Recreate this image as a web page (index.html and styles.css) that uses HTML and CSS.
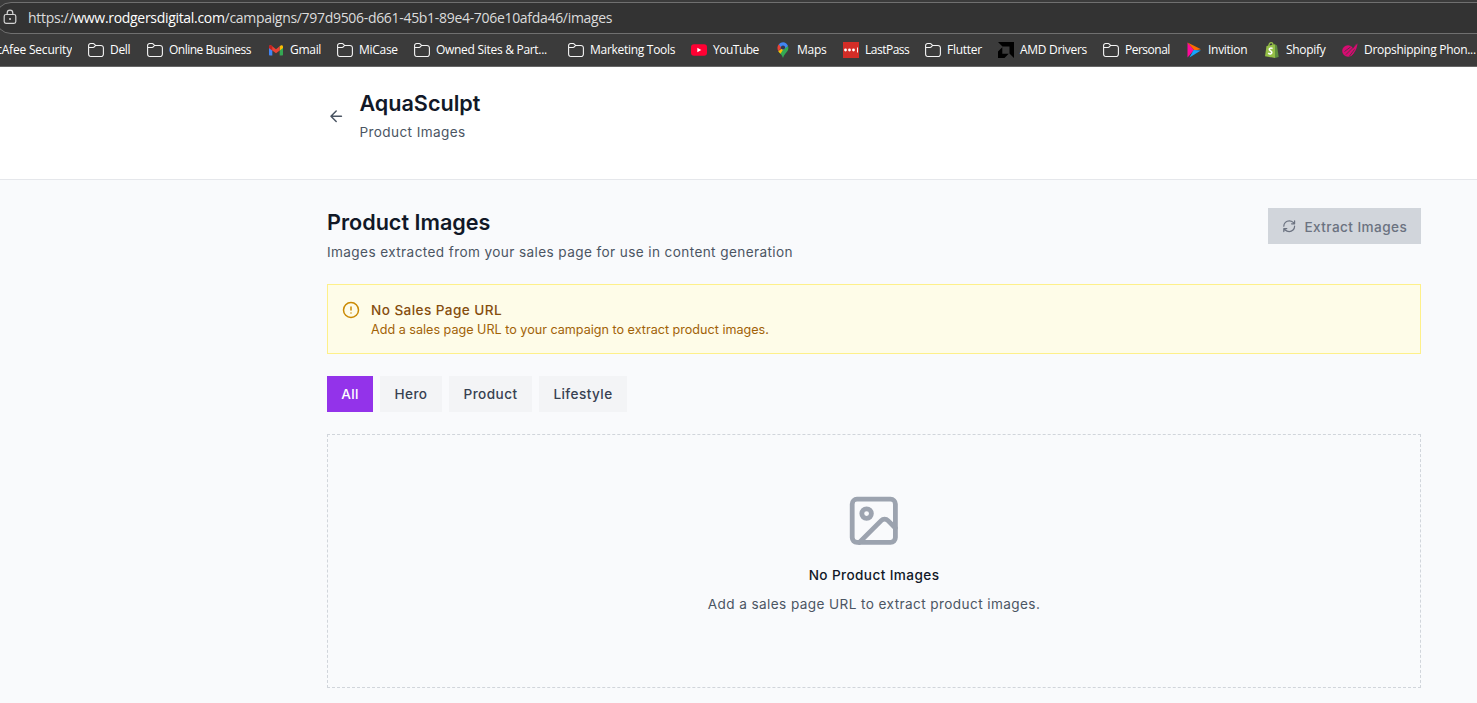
FILE: index.html
```
<!DOCTYPE html>
<html lang="en">
<head>
<meta charset="utf-8">
<title>AquaSculpt – Product Images</title>
<link rel="stylesheet" href="styles.css">
</head>
<body>
<svg class="defs" width="0" height="0">
  <symbol id="folder" viewBox="0 0 16 16"><path d="M.6 4.500V3.500a2 2 0 0 1 2-2h2.600c.5 0 .9.200 1.200.600L7.600 3.500H13a2.400 2.400 0 0 1 2.400 2.400v6.200A2.400 2.400 0 0 1 13 14.500H3a2.400 2.400 0 0 1-2.400-2.400zM.8 5.500h4.300c.5 0 .9-.2 1.200-.6L7.600 3.500" fill="none" stroke="#f4f4f4" stroke-width="1.100"/></symbol>
</svg>
<div class="browser">
  <div class="address">
    <svg class="lock" viewBox="0 0 14 16"><path d="M3 5.500h8a1.800 1.800 0 0 1 1.800 1.800v5.200a1.800 1.800 0 0 1-1.800 1.800H3a1.800 1.800 0 0 1-1.800-1.800V7.300A1.800 1.800 0 0 1 3 5.500zM4.200 5.300V4a2.800 2.800 0 0 1 5.600 0v1.300" fill="none" stroke="#d4d4d4" stroke-width="1.200"/><circle cx="7" cy="9.900" r="1" fill="#d4d4d4"/></svg>
    <span class="url">https://<b>www.rodgersdigital.com</b>/campaigns/797d9506-d661-45b1-89e4-706e10afda46/images</span>
  </div>
  <nav class="bookmarks">
    <a class="bm cut"><span>McAfee Security</span></a>
    <a class="bm"><svg><use href="#folder"/></svg><span>Dell</span></a>
    <a class="bm tight"><svg><use href="#folder"/></svg><span>Online Business</span></a>
    <a class="bm"><svg viewBox="0 0 16 16"><path d="M1 4.500v8.200c0 .5.300.8.800.8h2.500V6.500z" fill="#4285f4"/><path d="M15 4.500v8.200c0 .5-.3.800-.8.800h-2.500V6.500z" fill="#34a853"/><path d="M11.700 4.500l1-.9c1-.8 2.300-.2 2.300 1.100V6l-3.300 2.500z" fill="#fbbc04"/><path d="M1 6V4.700c0-1.300 1.300-1.900 2.300-1.100L8 7.200l3.700-2.900v4.200L8 11.300 4.300 8.500z" fill="#ea4335"/><path d="M1 6V4.700c0-1.300 1.300-1.900 2.300-1.100l1 .8v4.100z" fill="#c5221f"/></svg><span>Gmail</span></a>
    <a class="bm"><svg><use href="#folder"/></svg><span>MiCase</span></a>
    <a class="bm"><svg><use href="#folder"/></svg><span>Owned Sites &amp; Part...</span></a>
    <a class="bm"><svg><use href="#folder"/></svg><span>Marketing Tools</span></a>
    <a class="bm tight"><svg viewBox="0 0 16 16"><rect y="2.300" width="16" height="11.400" rx="3" fill="#ff0033"/><path d="M6.300 5.700v4.600l4-2.300z" fill="#fff"/></svg><span>YouTube</span></a>
    <a class="bm"><svg viewBox="0 0 16 16"><path d="M3.300 9.300C4.500 11.500 7 12.500 8 16c1-3.500 3-4.700 4.500-7 .8-1.300 1.200-3.200.5-5z" fill="#34a853"/><path d="M3.300 9.300L11 3l-5.500 8.700C4.600 10.800 3.900 10.200 3.300 9.300z" fill="#fbbc04"/><path d="M3.800 2.200L7 5 3.300 9.300C2 7 2.200 4 3.800 2.200z" fill="#ea4335"/><path d="M3.800 2.200C6.500-1 11.500-.5 13 4L8 8z" fill="#4285f4"/><circle cx="8" cy="5.500" r="2.100" fill="#30384f"/></svg><span>Maps</span></a>
    <a class="bm tight"><svg viewBox="0 0 16 16"><path d="M0 0h16v16H0z" fill="#d32d27"/><g fill="#fff"><circle cx="2.500" cy="8" r="1.400"/><circle cx="6.500" cy="8" r="1.400"/><circle cx="10.500" cy="8" r="1.400"/><path d="M14 5.500h.9v5H14z"/></g></svg><span>LastPass</span></a>
    <a class="bm"><svg><use href="#folder"/></svg><span>Flutter</span></a>
    <a class="bm"><svg viewBox="0 0 16 16"><path d="M0 0h16v16l-4.500-4.500v-7h-7zM4.300 5.300v6.400h6.400L6.500 16H0V9.600z" fill="#000"/></svg><span>AMD Drivers</span></a>
    <a class="bm tight"><svg><use href="#folder"/></svg><span>Personal</span></a>
    <a class="bm"><svg viewBox="0 0 16 16"><path d="M1.500.5L8 8l-6.500 7.500z" fill="#ff0a9b"/><path d="M1.500.5L15 7.300 8.500 8.500z" fill="#ff6a00"/><path d="M14.800 8.500L3.500 15.500 7.500 8z" fill="#14a5ff"/></svg><span>Invition</span></a>
    <a class="bm"><svg viewBox="0 0 16 16"><path d="M2.500 4l8.500-1.700V16L1 14.200z" fill="#95bf47"/><path d="M11 2.300l2 1.200L14.700 15 11 16z" fill="#5e8e3e"/><path d="M4.700 4.200C5 2 6 .6 7.200.6S9 1.500 9 3" fill="none" stroke="#95bf47" stroke-width="1.200"/><path d="M8.600 6.400C6.800 5.600 5.200 6.200 5.300 7.500c.1 1.400 2.600 1.500 2.500 3-.1 1.700-2.200 1.800-3.600.7" fill="none" stroke="#fff" stroke-width="1.600"/></svg><span>Shopify</span></a>
    <a class="bm"><svg viewBox="0 0 16 16"><circle cx="6" cy="9" r="5.800" fill="#d80b72"/><path d="M9.500 9l4-6.500 2-1C15 6 13 11 8.500 14.500z" fill="#d80b72"/><path d="M2.500 9.500L8.500 5M4 12.500L14.500 2M7.500 14l5-6.500" stroke="#3b3b3b" stroke-width=".8"/></svg><span>Dropshipping Phon...</span></a>
  </nav>
</div>
<header class="top">
  <svg class="back" viewBox="0 0 24 24"><path d="m12 19-7-7 7-7M19 12H5"/></svg>
  <div>
    <h1>AquaSculpt</h1>
    <p class="sub crumb">Product Images</p>
  </div>
</header>
<main>
  <div class="head">
    <div>
      <h2>Product Images</h2>
      <p class="sub lead">Images extracted from your sales page for use in content generation</p>
    </div>
    <button class="extract" disabled>
      <svg viewBox="0 0 24 24"><path d="M3 12a9 9 0 0 1 9-9 9.750 9.750 0 0 1 6.740 2.740L21 8M21 3v5h-5M21 12a9 9 0 0 1-9 9 9.750 9.750 0 0 1-6.740-2.740L3 16M8 16H3v5"/></svg>
      <span>Extract Images</span>
    </button>
  </div>
  <section class="notice">
    <svg viewBox="0 0 24 24"><circle cx="12" cy="12" r="10"/><path d="M12 8v4M12 16h.01"/></svg>
    <div>
      <h3>No Sales Page URL</h3>
      <p>Add a sales page URL to your campaign to extract product images.</p>
    </div>
  </section>
  <div class="tabs">
    <button class="tab active">All</button>
    <button class="tab hero">Hero</button>
    <button class="tab product">Product</button>
    <button class="tab life">Lifestyle</button>
  </div>
  <section class="empty">
    <svg viewBox="0 0 24 24"><rect x="3" y="3" width="18" height="18" rx="2"/><circle cx="9" cy="9" r="2"/><path d="m21 15-3.086-3.086a2 2 0 0 0-2.828 0L6 21"/></svg>
    <h3>No Product Images</h3>
    <p>Add a sales page URL to extract product images.</p>
  </section>
</main>
</body>
</html>
```
FILE: styles.css
```
* { box-sizing: border-box; }
body { margin: 0; height: 703px; overflow: hidden; background: #f9fafc; font-family: Inter, sans-serif; font-size: 13.600px; color: #111827; }
h1, h2, h3, p { margin: 0; }
.defs { position: absolute; }

.browser { height: 67px; padding-top: 2px; background: #3b3b3b; border-bottom: 1px solid #666; overflow: hidden; font-family: "Open Sans", "Noto Sans", sans-serif; color: #fff; }
.address { height: 32px; margin: 0 -20px 0 -5px; padding-left: 7px; display: flex; align-items: center; background: #333; border: 1px solid #707070; border-radius: 16px; }
.lock { width: 14px; height: 16px; flex: none; margin-top: -2px; }
.url { margin: -1px 0 0 11px; font-size: 14px; letter-spacing: -.31px; color: #dcdcdc; white-space: nowrap; }
.url b { font-weight: 400; color: #fff; }
.bookmarks { height: 32px; display: grid; grid-template-columns: 88px 59px 121px 69px 77px 154px 123px 84px 68px 82px 73px 105px 83px 78px 78px 135px; align-items: center; }
.bm { display: flex; align-items: center; gap: 6px; font-size: 12px; letter-spacing: -.29px; white-space: nowrap; }
.bm.tight { letter-spacing: -.5px; }
.bm svg { width: 16px; height: 16px; flex: none; }
.bm span { margin-top: -1px; }
.bm.cut { width: 72px; overflow: hidden; justify-content: flex-end; letter-spacing: -.2px; }

.top { height: 113px; padding: 22px 0 0 329px; display: flex; gap: 16px; background: #fff; border-bottom: 1px solid #e5e7eb; }
.back { width: 14.400px; height: 14.400px; margin-top: 20px; transform: scale(1.250); }
.back, .extract svg, .notice svg, .empty svg { flex: none; fill: none; stroke: currentColor; stroke-width: 2; stroke-linecap: round; stroke-linejoin: round; }
.back { color: #4b5563; }
h1, h2 { font-size: 21.600px; line-height: 29px; font-weight: 600; }
.sub { font-size: 13.600px; line-height: 21px; color: #4b5563; letter-spacing: .39px; }
.crumb { margin-top: 4px; }

main { padding: 28px 56px 0 327px; }
.head { height: 76px; display: flex; justify-content: space-between; align-items: flex-start; }
.lead { margin-top: 5px; }
.extract { width: 153px; height: 36px; padding: 0 14px; display: flex; align-items: center; gap: 8px; border: 0; background: #d1d5db; color: #6b7280; font: 500 13.600px Inter, sans-serif; letter-spacing: .42px; white-space: nowrap; }
.extract svg { width: 14.400px; height: 14.400px; }
.extract span { margin-top: 2px; }

.notice { height: 70px; padding: 15px 14px; display: flex; gap: 11px; background: #fefce8; border: 1px solid #fef08a; }
.notice svg { width: 18px; height: 18px; margin-top: 1px; color: #ca8a04; }
.notice h3 { font-size: 13.600px; line-height: 20px; font-weight: 500; letter-spacing: .42px; color: #854d0e; }
.notice p { font-size: 12.600px; line-height: 20px; color: #a16207; }

.tabs { margin-top: 22px; display: flex; gap: 7px; }
.tab { height: 36px; padding: 0 0 1px; border: 0; background: #f3f4f6; color: #374151; font: 500 13.600px Inter, sans-serif; letter-spacing: .42px; }
.tab.active { width: 46px; background: #9333ea; color: #fff; }
.hero { width: 62px; }
.product { width: 83px; }
.life { width: 88px; }

.empty { height: 254px; margin-top: 22px; padding-top: 57px; display: flex; flex-direction: column; align-items: center; border: 1px dashed #d1d5db; }
.empty svg { width: 57.600px; height: 57.600px; color: #9ca3af; }
.empty h3 { margin-top: 15.400px; font-size: 13.600px; line-height: 21px; font-weight: 500; letter-spacing: .4px; }
.empty p { margin-top: 8px; font-size: 13.600px; line-height: 21px; color: #4b5563; letter-spacing: .4px; }
```
